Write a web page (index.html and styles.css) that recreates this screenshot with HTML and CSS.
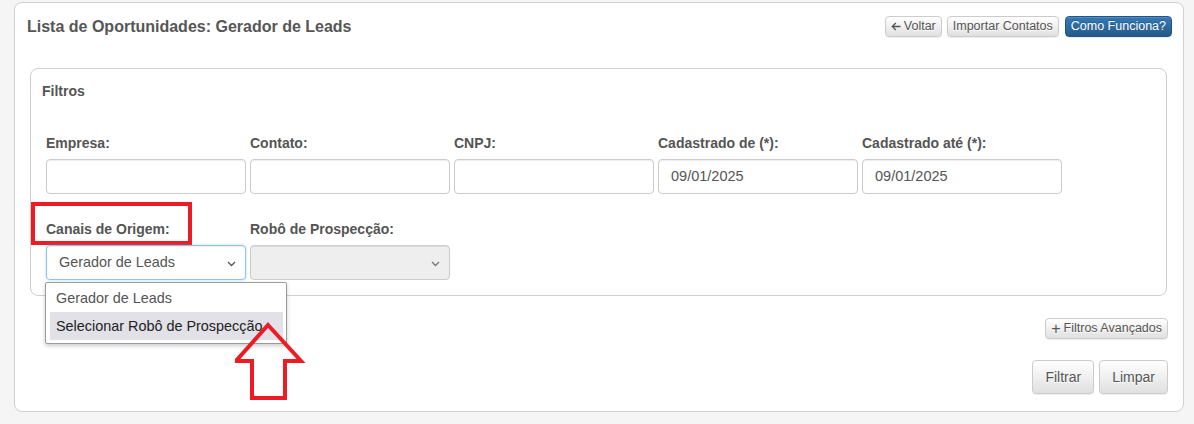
FILE: index.html
```html
<!DOCTYPE html>
<html lang="pt-BR">
<head>
<meta charset="utf-8">
<title>Lista de Oportunidades</title>
<link rel="stylesheet" href="styles.css">
</head>
<body>
<div class="card">
  <div class="card-head">
    <h1 class="title">Lista de Oportunidades: Gerador de Leads</h1>
    <div class="head-actions">
      <button class="btn btn-xs"><svg class="back" width="10" height="9" viewBox="0 0 10 9"><path d="M9.5 4.5H1.5M4.8 1L1.3 4.5L4.8 8" fill="none" stroke="#555" stroke-width="1.3"/></svg>Voltar</button>
      <button class="btn btn-xs">Importar Contatos</button>
      <button class="btn btn-xs btn-primary">Como Funciona?</button>
    </div>
  </div>

  <div class="panel">
    <div class="panel-title">Filtros</div>
    <div class="grid">
      <div class="field">
        <label class="lbl">Empresa:</label>
        <div class="input"></div>
      </div>
      <div class="field">
        <label class="lbl">Contato:</label>
        <div class="input"></div>
      </div>
      <div class="field">
        <label class="lbl">CNPJ:</label>
        <div class="input"></div>
      </div>
      <div class="field">
        <label class="lbl">Cadastrado de (*):</label>
        <div class="input">09/01/2025</div>
      </div>
      <div class="field">
        <label class="lbl">Cadastrado até (*):</label>
        <div class="input">09/01/2025</div>
      </div>
    </div>
    <div class="grid row2">
      <div class="field">
        <span class="highlight-box"></span>
        <label class="lbl">Canais de Origem:</label>
        <div class="input select focus">Gerador de Leads
          <svg class="chev" width="9" height="6" viewBox="0 0 9 6"><path d="M1 1l3.5 3.5L8 1" fill="none" stroke="#555" stroke-width="1.3"/></svg>
        </div>
        <div class="dropdown">
          <div class="opt">Gerador de Leads</div>
          <div class="opt active">Selecionar Robô de Prospecção</div>
        </div>
      </div>
      <div class="field">
        <label class="lbl">Robô de Prospecção:</label>
        <div class="input select disabled">
          <svg class="chev" width="9" height="6" viewBox="0 0 9 6"><path d="M1 1l3.5 3.5L8 1" fill="none" stroke="#777" stroke-width="1.3"/></svg>
        </div>
      </div>
    </div>
  </div>

  <div class="adv-row">
    <button class="btn btn-xs"><span class="plus">+</span>Filtros Avançados</button>
  </div>
  <div class="actions">
    <button class="btn btn-md">Filtrar</button>
    <button class="btn btn-md">Limpar</button>
  </div>

  <svg class="arrow" width="80" height="90" viewBox="0 0 80 90">
    <polygon points="33,4 66,40 50,40 50,77 17,77 17,40 1,40" fill="none" stroke="#ed1c24" stroke-width="4" stroke-linejoin="miter"/>
  </svg>
</div>
</body>
</html>
```

FILE: styles.css
```css
* { box-sizing: border-box; }
html, body { margin: 0; padding: 0; }
body {
  background: #f5f5f5;
  font-family: "Liberation Sans", Arial, sans-serif;
  color: #555;
  width: 1194px;
  height: 424px;
  overflow: hidden;
}
.card {
  position: relative;
  margin: 2px 0 0 14px;
  width: 1170px;
  height: 410px;
  background: #fff;
  border: 1px solid #d0d0d0;
  border-radius: 8px;
  padding: 13px 12px 0 12px;
}
.card-head {
  display: flex;
  justify-content: space-between;
  align-items: center;
  height: 21px;
}
.title {
  margin: 0;
  font-size: 16px;
  font-weight: bold;
  line-height: 21px;
  color: #565656;
}
.head-actions {
  display: flex;
  gap: 5px;
  margin-right: -1px;
}
.btn {
  font-family: "Liberation Sans", Arial, sans-serif;
  color: #555;
  background: linear-gradient(to bottom, #fff 0%, #e0e0e0 100%);
  border: 1px solid #ccc;
  border-radius: 4px;
  text-shadow: 0 1px 0 #fff;
  box-shadow: inset 0 1px 0 rgba(255,255,255,.15), 0 1px 1px rgba(0,0,0,.075);
  cursor: pointer;
  margin: 0;
}
.btn-xs {
  font-size: 12.5px;
  line-height: 17px;
  height: 21px;
  padding: 1px 5px;
  display: inline-flex;
  align-items: center;
}
.back {
  margin-right: 3px;
}
.btn-primary {
  color: #fff;
  text-shadow: 0 -1px 0 rgba(0,0,0,.2);
  background: linear-gradient(to bottom, #337ab7 0%, #265a88 100%);
  border-color: #245580;
  margin-left: 1px;
}
.btn-md {
  font-size: 14px;
  line-height: 20px;
  height: 34px;
  padding: 6px 12px;
}
.panel {
  margin: 31px 4px 0 3px;
  border: 1px solid #d0d0d0;
  border-radius: 8px;
  padding: 12px 15px 15px 11px;
  height: 228px;
}
.panel-title {
  font-size: 14px;
  font-weight: bold;
  line-height: 20px;
  color: #555;
}
.grid {
  display: grid;
  grid-template-columns: repeat(5, 200px);
  column-gap: 4px;
  margin-top: 32px;
  margin-left: 4px;
}
.grid.row2 {
  margin-top: 25px;
  grid-template-columns: repeat(2, 200px);
}
.field {
  position: relative;
}
.lbl {
  display: block;
  font-size: 14px;
  font-weight: bold;
  line-height: 20px;
  margin-bottom: 6px;
  color: #555;
  white-space: nowrap;
}
.input {
  height: 35px;
  border: 1px solid #ccc;
  border-radius: 4px;
  box-shadow: inset 0 1px 1px rgba(0,0,0,.075);
  font-size: 14.5px;
  line-height: 33px;
  padding: 0 12px;
  color: #555;
  background: #fff;
}
.select {
  position: relative;
  font-size: 14.4px;
}
.select.focus {
  border-color: #8ec3ea;
  box-shadow: inset 0 1px 1px rgba(0,0,0,.075), 0 0 3px rgba(102,175,233,.45);
}
.select.disabled {
  background: #eee;
}
.chev {
  position: absolute;
  right: 9px;
  top: 15px;
}
.highlight-box {
  position: absolute;
  left: -15px;
  top: -17px;
  width: 161px;
  height: 43px;
  border: 4px solid #ed1c24;
  pointer-events: none;
}
.dropdown {
  position: absolute;
  left: -1px;
  top: 63px;
  width: 242px;
  height: 62px;
  background: #fff;
  border: 1px solid #9a9a9a;
  border-radius: 2px;
  box-shadow: 0 2px 4px rgba(0,0,0,.2);
  padding: 1px 3px 2px 4px;
  z-index: 5;
}
.opt {
  height: 28px;
  line-height: 28px;
  font-size: 14.4px;
  padding-left: 6px;
  color: #555;
  white-space: nowrap;
}
.opt.active {
  background: #e1e1e7;
  color: #222;
}
.adv-row {
  display: flex;
  justify-content: flex-end;
  margin: 22px 3px 0 0;
}
.plus {
  font-size: 16px;
  line-height: 15px;
  margin-right: 3px;
}
.actions {
  display: flex;
  justify-content: flex-end;
  gap: 5px;
  margin: 21px 3px 0 0;
}
.arrow {
  position: absolute;
  left: 220px;
  top: 318px;
  z-index: 6;
}
```
